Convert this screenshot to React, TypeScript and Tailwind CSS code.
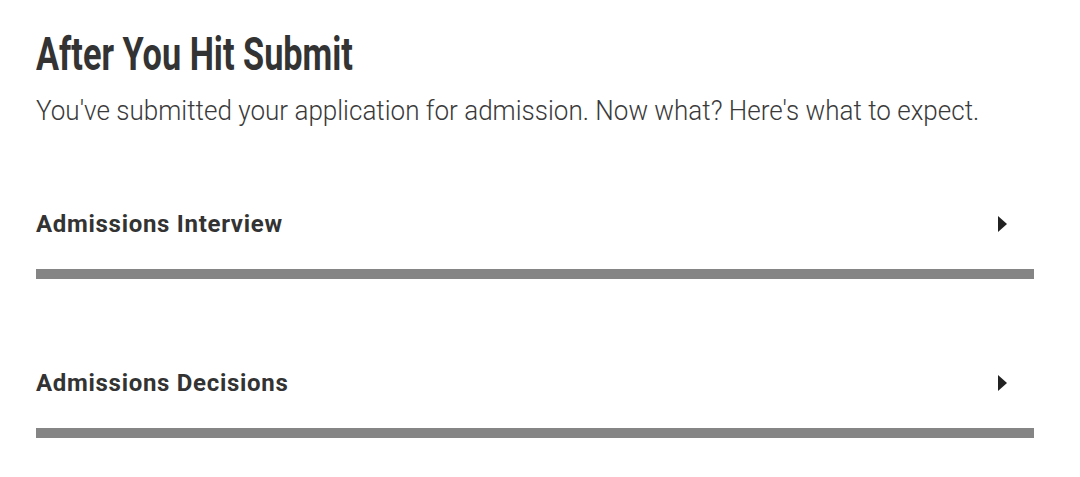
import React from "react";

function Item({ title }: { title: string }) {
  return (
    <div>
      <div className="flex items-center justify-between pr-[27px]">
        <span className="text-[24px] font-bold text-[#333] leading-none tracking-[0.7px]">
          {title}
        </span>
        <svg width="9" height="16" viewBox="0 0 9 16">
          <path d="M0 0 L9 8 L0 16 Z" fill="#222" />
        </svg>
      </div>
      <div className="mt-[33px] h-[10px] bg-[#858585]" />
    </div>
  );
}

export default function App() {
  return (
    <div className="bg-white w-[1080px] h-[477px] pl-[36px] pr-[46px] pt-[31px]" style={{ fontFamily: "Roboto, sans-serif" }}>
      <h1 className="text-[46px] font-bold text-[#333] leading-none origin-left scale-x-[0.745]">After You Hit Submit</h1>
      <p className="mt-[20px] text-[28px] font-light text-[#3a3a3a] leading-none whitespace-nowrap origin-left scale-x-[0.93]">
        You've submitted your application for admission. Now what? Here's what to expect.
      </p>
      <div className="mt-[87px] flex flex-col gap-[92px]">
        <Item title="Admissions Interview" />
        <Item title="Admissions Decisions" />
      </div>
    </div>
  );
}
